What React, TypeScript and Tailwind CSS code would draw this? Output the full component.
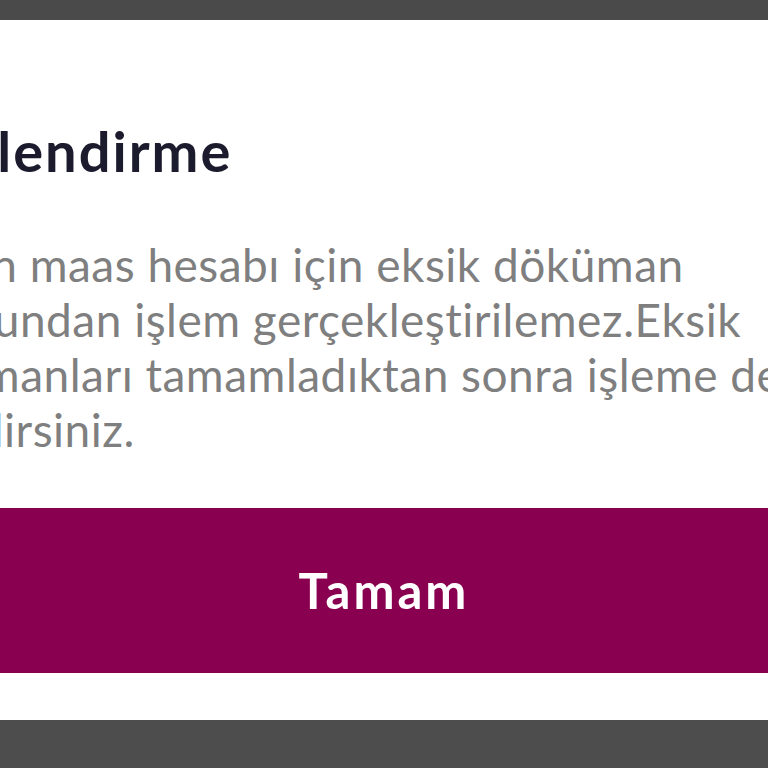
import React from 'react';

const lines = [
  'Kişinin maas hesabı için eksik döküman',
  'olduğundan işlem gerçekleştirilemez.Eksik',
  'dökümanları tamamladıktan sonra işleme devam',
  'edebilirsiniz.',
];

const App = () => {
  return (
    <div
      className="w-[768px] h-[768px] overflow-hidden bg-[#4d4d4d] flex flex-col"
      style={{ fontFamily: 'Lato, "Noto Sans", sans-serif' }}
    >
      <div className="h-[20px] shrink-0 bg-[#4a4a4a]" />
      <div className="h-[700px] shrink-0 bg-white flex flex-col overflow-hidden">
        <div className="flex flex-col -ml-[121px] whitespace-nowrap">
          <div className="pt-[101px] text-[56px] leading-[60px] font-bold tracking-[2px] text-[#1b1b2d]">
            Bilgilendirme
          </div>
          <div className="pt-[56px] flex flex-col text-[46px] leading-[55px] tracking-[0.5px] text-[#7f7f7f]">
            {lines.map((line, index) => (
              <div key={index}>{line}</div>
            ))}
          </div>
        </div>
        <div className="mt-auto mb-[47px] h-[165px] bg-[#8a0050] flex items-center justify-center">
          <span className="text-[49px] leading-none font-bold tracking-[3px] text-white">
            Tamam
          </span>
        </div>
      </div>
    </div>
  );
};

export default App;
